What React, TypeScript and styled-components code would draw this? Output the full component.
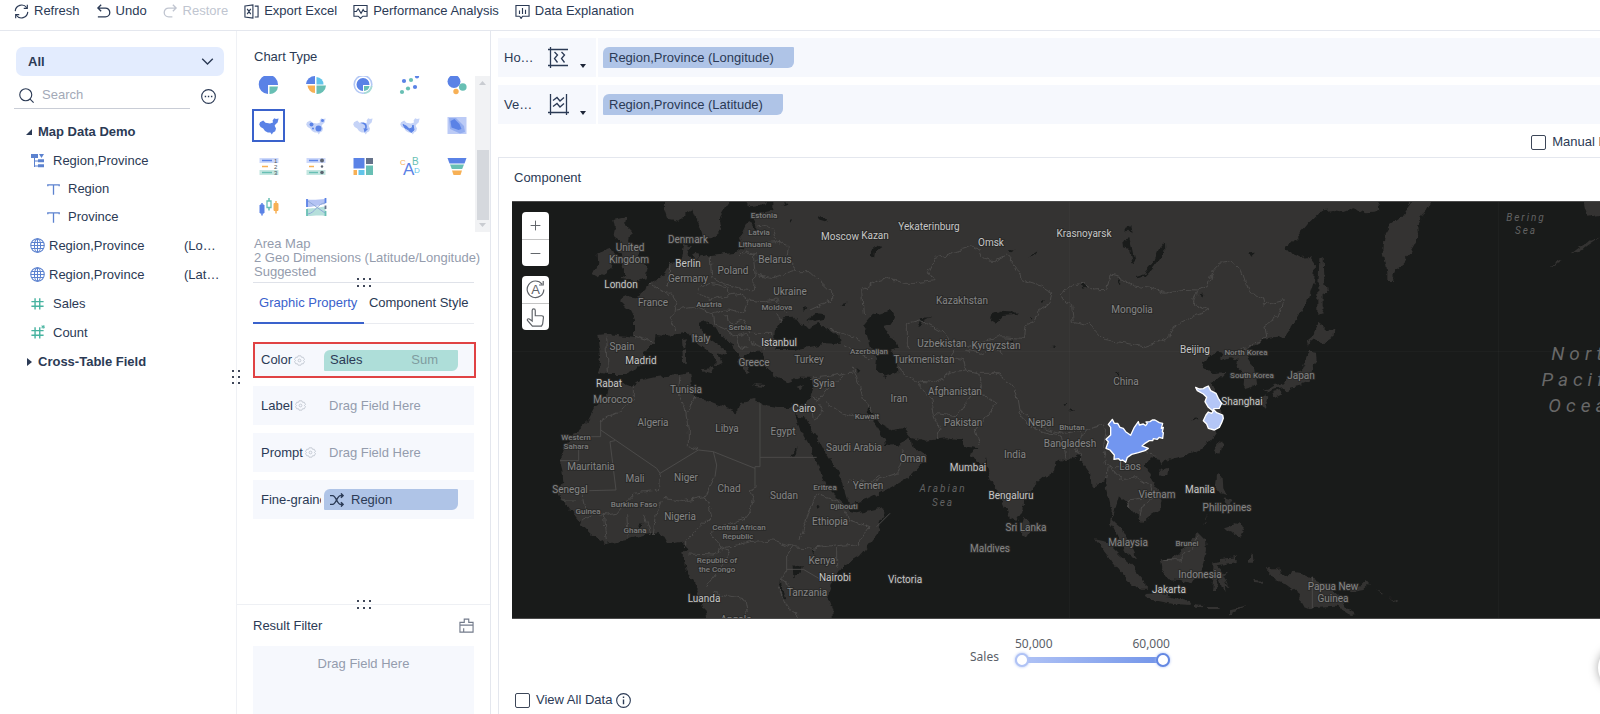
import React from "react";
import styled, { createGlobalStyle, css } from "styled-components";

const ink = "#2b3a55";
const muted = "#949cad";
const soft = "#f6f8fd";
const line = "#e4e7ee";
const accent = "#3a62cc";
const blue = "#5a82e6";
const teal = "#68bfb4";
const orange = "#f7b055";
const sky = "#62c4ea";

const GlobalStyle = createGlobalStyle`
  * { box-sizing: border-box; }
  body {
    margin: 0;
    background: #fff;
    color: ${ink};
    font: 13px/16px "Liberation Sans", Arial, sans-serif;
  }
  button, input, select { font: inherit; color: inherit; }
  button { background: none; border: 0; padding: 0; }
  svg { display: block; flex: none; }
`;

/* ---------- shell ---------- */

const Page = styled.div`
  display: flex;
  flex-direction: column;
  height: 100vh;
  overflow: hidden;
`;

const Toolbar = styled.header`
  display: flex;
  gap: 16px;
  flex: none;
  height: 31px;
  padding: 3px 14px 0;
  border-bottom: 1px solid ${line};
`;

const ToolButton = styled.button`
  display: flex;
  align-items: center;
  gap: 5px;
  height: 16px;
  white-space: nowrap;
  &:disabled { color: #c0c5d0; }
`;

const Body = styled.div`
  display: flex;
  flex: 1;
  min-height: 0;
`;

/* ---------- field list ---------- */

const FieldPanel = styled.aside`
  position: relative;
  flex: none;
  width: 237px;
  padding: 16px 12px 0 14px;
  border-right: 1px solid #eff1f5;
`;

const SelectWrap = styled.div`
  position: relative;
  margin-left: 2px;
  svg { position: absolute; right: 10px; top: 8px; pointer-events: none; }
`;

const GroupSelect = styled.select`
  appearance: none;
  width: 100%;
  height: 29px;
  padding: 0 12px;
  border: 0;
  border-radius: 7px;
  background: #e3ecfe;
  font-weight: bold;
`;

const SearchRow = styled.div`
  display: flex;
  align-items: center;
  gap: 11px;
  height: 33px;
  margin-bottom: 8px;
`;

const SearchBox = styled.label`
  display: flex;
  align-items: center;
  gap: 8px;
  width: 176px;
  height: 33px;
  padding: 6px 5px 0;
  border-bottom: 1px solid #c9cdd6;
  input {
    flex: 1;
    min-width: 0;
    padding: 0;
    border: 0;
    outline: 0;
    background: none;
  }
  input::placeholder { color: #a3a9b7; opacity: 1; }
`;

const IconButton = styled.button`
  display: grid;
  place-items: center;
  margin-top: 8px;
`;

const Tree = styled.ul`
  margin: 0;
  padding: 0;
  list-style: none;
`;

const TreeRow = styled.li<{ $indent: number; $h?: number; $gap?: number; $bold?: boolean }>`
  display: flex;
  align-items: center;
  gap: ${(p) => p.$gap ?? 8}px;
  height: ${(p) => p.$h ?? 29}px;
  padding-left: ${(p) => p.$indent}px;
  font-weight: ${(p) => (p.$bold ? "bold" : "normal")};
`;

const FieldSuffix = styled.span`
  margin-left: auto;
  width: 40px;
`;

const SideGrip = styled.div`
  position: absolute;
  right: -5px;
  top: 339px;
`;

/* ---------- chart settings ---------- */

const SettingsPanel = styled.section`
  display: flex;
  flex-direction: column;
  flex: none;
  width: 254px;
  border-right: 1px solid ${line};
`;

const SettingsMain = styled.div`
  flex: 1;
  min-height: 0;
  overflow: hidden;
`;

const PanelTitle = styled.h2`
  margin: 0;
  padding: 18px 17px 0;
  height: 45px;
  font-size: 13px;
  font-weight: normal;
`;

const ChartScroller = styled.div`
  display: flex;
  height: 156px;
  overflow: hidden;
`;

const ChartGrid = styled.div`
  display: grid;
  flex: 1;
  min-width: 0;
  align-content: start;
  grid-template-columns: repeat(5, 47px);
  grid-auto-rows: 41px;
  place-items: center;
  margin-top: -12px;
  padding-left: 8px;
`;

const ChartButton = styled.button<{ $active?: boolean }>`
  display: grid;
  place-items: center;
  width: 33px;
  height: 33px;
  border: 2px solid ${(p) => (p.$active ? accent : "transparent")};
  svg { overflow: visible; }
`;

const ScrollTrack = styled.div`
  display: flex;
  flex-direction: column;
  align-items: center;
  justify-content: space-between;
  width: 15px;
  padding: 5px 0;
  background: #f1f2f4;
`;

const ScrollThumb = styled.div`
  width: 12px;
  height: 70px;
  margin-top: 62px;
  background: #d5d8dd;
`;

const ChartHint = styled.p`
  margin: 0 0 3px;
  padding: 5px 0 0 17px;
  line-height: 14px;
  color: ${muted};
  white-space: nowrap;
`;

const GripRow = styled.div<{ $wide?: boolean }>`
  position: relative;
  height: 1px;
  margin: 0 ${(p) => (p.$wide ? 0 : 16)}px;
  background: ${(p) => (p.$wide ? "#eef0f4" : "#dfe2e9")};
  svg { position: absolute; left: calc(50% - 7px); top: -4px; }
`;

const Tabs = styled.div`
  display: flex;
  height: 41px;
  margin: 0 16px 18px;
  border-bottom: 1px solid #e9ebf0;
`;

const Tab = styled.button<{ $active?: boolean }>`
  flex: 1;
  min-width: 0;
  height: 41px;
  white-space: nowrap;
  border-bottom: 2px solid ${(p) => (p.$active ? accent : "transparent")};
  color: ${(p) => (p.$active ? accent : ink)};
`;

const PropertyList = styled.div`
  display: flex;
  flex-direction: column;
  gap: 8px;
  padding: 0 16px;
`;

const PropertyRow = styled.div<{ $marked?: boolean }>`
  display: flex;
  align-items: center;
  height: 39px;
  padding: 0 16px 0 8px;
  background: ${soft};
  ${(p) =>
    p.$marked &&
    css`
      height: 36px;
      margin-right: -2px;
      padding: 0 16px 0 6px;
      border: 2px solid #e04244;
    `}
`;

const PropertyName = styled.div`
  display: flex;
  align-items: center;
  gap: 2px;
  flex: none;
  width: 60px;
  margin-right: 3px;
  overflow: hidden;
  white-space: nowrap;
`;

const DropHint = styled.span`
  padding-left: 5px;
  color: ${muted};
`;

const Chip = styled.button<{ $tone: "teal" | "blue"; $fill?: boolean }>`
  display: flex;
  align-items: center;
  gap: 7px;
  height: 21px;
  padding: 0 20px 0 6px;
  border-radius: 6px 1px;
  background: ${(p) => (p.$tone === "teal" ? "#aeded9" : "#afc4e7")};
  white-space: nowrap;
  ${(p) => p.$fill && css`flex: 1;`}
`;

const Aggregate = styled.span`
  margin-left: auto;
  color: #7f9c9f;
`;

const FilterSection = styled.section`
  display: flex;
  flex-direction: column;
  flex: none;
  height: 110px;
`;

const FilterHead = styled.div`
  display: flex;
  justify-content: space-between;
  align-items: center;
  height: 41px;
  padding: 0 16px;
`;

const FilterDrop = styled.div`
  flex: 1;
  margin: 0 16px;
  padding-top: 10px;
  background: ${soft};
  color: ${muted};
  text-align: center;
`;

/* ---------- workspace ---------- */

const Workspace = styled.main`
  display: flex;
  flex-direction: column;
  flex: 1;
  min-width: 0;
  padding: 7px 0 0 7px;
  overflow: hidden;
`;

const AxisRow = styled.div`
  display: flex;
  gap: 2px;
  flex: none;
  height: 39px;
  margin-bottom: 8px;
`;

const AxisLabel = styled.div`
  display: flex;
  align-items: center;
  width: 98px;
  padding: 0 10px 0 6px;
  background: ${soft};
  span { width: 44px; }
`;

const AxisButton = styled.button`
  display: flex;
  align-items: flex-end;
  gap: 11px;
`;

const AxisFields = styled.div`
  display: flex;
  align-items: center;
  flex: 1;
  padding-left: 5px;
  background: ${soft};
`;

const ManualRow = styled.div`
  display: flex;
  justify-content: flex-end;
  align-items: flex-start;
  flex: none;
  height: 25px;
  padding-top: 2px;
`;

const Check = styled.label<{ $bleed?: boolean }>`
  display: flex;
  align-items: center;
  gap: 6px;
  white-space: nowrap;
  ${(p) => p.$bleed && css`margin-right: -44px;`}
  input {
    appearance: none;
    width: 15px;
    height: 15px;
    margin: 0;
    border: 1px solid #3c4658;
    border-radius: 2px;
    background: #fff;
  }
`;

const Card = styled.section`
  position: relative;
  display: flex;
  flex-direction: column;
  flex: 1;
  min-height: 0;
  border: solid ${line};
  border-width: 1px 0 0 1px;
`;

const CardTitle = styled.h1`
  flex: none;
  margin: 0;
  height: 43px;
  padding: 12px 15px;
  font-size: 13px;
  font-weight: normal;
`;

const MapFrame = styled.div`
  position: relative;
  flex: 1;
  min-height: 0;
  margin-left: 13px;
  border: solid #4b4b4b;
  border-width: 1px 0;
  background: #191b1a;
  overflow: hidden;
`;

const MapSvg = styled.svg`
  width: 100%;
  height: 100%;
  font-family: Roboto, sans-serif;
`;

const MapTools = styled.div`
  position: absolute;
  left: 10px;
  top: 10px;
  display: flex;
  flex-direction: column;
  gap: 10px;
`;

const ToolPair = styled.div`
  width: 27px;
  border-radius: 4px;
  background: #fff;
  overflow: hidden;
`;

const MapTool = styled.button`
  display: grid;
  place-items: center;
  width: 27px;
  height: 27px;
  color: #5f6368;
  & + & { border-top: 1px solid #c4c4c4; }
`;

const CardFoot = styled.footer`
  display: flex;
  flex-direction: column;
  flex: none;
  height: 95px;
  padding: 12px 0 0 16px;
`;

const Legend = styled.div`
  display: flex;
  align-items: center;
  gap: 16px;
  align-self: center;
  margin-left: 25px;
  height: 36px;
  font: 12px/16px "Noto Sans", sans-serif;
  color: #5b5f69;
`;

const LegendScale = styled.div`
  width: 155px;
`;

const LegendTexts = styled.div`
  display: flex;
  justify-content: space-between;
  height: 16px;
`;

const LegendName = styled.span`
  padding-top: 18px;
  height: 36px;
`;

const SliderTrack = styled.div`
  position: relative;
  height: 6px;
  margin-top: 5px;
  border-radius: 3px;
  background: linear-gradient(90deg, #b3c5f6, #6f92e8);
`;

const RangeInput = styled.input<{ $ring: string }>`
  position: absolute;
  left: 0;
  top: -5px;
  width: 100%;
  height: 16px;
  margin: 0;
  appearance: none;
  background: none;
  pointer-events: none;
  &::-webkit-slider-thumb {
    appearance: none;
    width: 14px;
    height: 14px;
    border: 2px solid ${(p) => p.$ring};
    border-radius: 50%;
    background: #fff;
    box-shadow: 0 0 3px #a9bdf3;
    pointer-events: auto;
  }
`;

const FootRow = styled.div`
  display: flex;
  align-items: center;
  gap: 4px;
  margin-top: 25px;
`;

const FloatButton = styled.button`
  position: absolute;
  right: -42px;
  bottom: 24px;
  width: 44px;
  height: 44px;
  border-radius: 50%;
  background: #fff;
  box-shadow: 0 0 10px rgba(0, 0, 0, 0.35);
`;

/* ---------- small icons ---------- */

type StrokeProps = { size?: number; w?: number; color?: string; children: React.ReactNode };
const Stroke = ({ size = 15, w = 1.2, color = "currentColor", children }: StrokeProps) => (
  <svg width={size} height={size} viewBox="0 0 16 16" fill="none" stroke={color} strokeWidth={w}>
    {children}
  </svg>
);

const Dots = ({ cols, rows }: { cols: number; rows: number }) => (
  <svg width={cols * 7 - 5} height={rows * 7 - 5} fill="#3f4759">
    {Array.from({ length: cols * rows }, (_, i) => (
      <rect key={i} x={(i % cols) * 6} y={Math.floor(i / cols) * (rows === 2 ? 7 : 6)} width="2" height="2" />
    ))}
  </svg>
);

const RefreshIcon = () => (
  <Stroke>
    <path d="M1.3 7.6A6.8 6.8 0 0 1 13.6 4M14.7 8.4A6.8 6.8 0 0 1 2.4 12" />
    <path d="M14.2 .8V4.6H10.4M1.8 15.2V11.4H5.6" />
  </Stroke>
);
const UndoIcon = () => (
  <Stroke w={1.4}>
    <path d="M5.5 .8 2 4.3 5.5 7.8M2 4.3H10a4.7 4.7 0 0 1 0 9.4H2" />
  </Stroke>
);
const RestoreIcon = () => (
  <Stroke w={1.4}>
    <path d="M10.5 .8 14 4.3 10.5 7.8M14 4.3H6a4.7 4.7 0 0 0 0 9.4H10" />
  </Stroke>
);
const ExcelIcon = () => (
  <Stroke>
    <path d="M1 2.2 9.5 1v14L1 13.8zM11.5 2.2H15v11.6h-3.5M3.4 5.2l3.8 5.6M7.2 5.2l-3.8 5.6" />
  </Stroke>
);
const PerfIcon = () => (
  <Stroke>
    <path d="M5.5 13H1V1.6h14V13h-4.5L8 15.4 5.5 13M1 8h2.6l2-3 3 5 2.2-4 1.4 2H15" />
  </Stroke>
);
const ExplainIcon = () => (
  <Stroke>
    <path d="M5 13H1V1.6h14V13H8L6.5 15.4 5 13M4.8 7v3.6M8 4.2v6.4M11.2 6v4.6" />
  </Stroke>
);
const GearIcon = () => (
  <Stroke size={11} w={1.1} color="#b9bfca">
    <path d="M6 1.2h4l1 2.2 2.4-.2 1.8 3.4L13.8 8l1.4 1.6-1.8 3.3-2.4-.2-1 2.1H6l-1-2.1-2.4.2L.8 9.6 2.2 8 .8 6.6l1.8-3.4 2.4.2z" />
    <circle cx="8" cy="8" r="2" />
  </Stroke>
);
const GlobeIcon = () => (
  <Stroke color="#5c82cf" w={1.1}>
    <circle cx="8" cy="8" r="7.2" />
    <ellipse cx="8" cy="8" rx="3.3" ry="7.2" />
    <path d="M8 .8v14.4M1.7 4.8h12.6M1.7 11.2h12.6M.8 8h14.4" />
  </Stroke>
);
const HashIcon = ({ star }: { star?: boolean }) => (
  <Stroke color="#47b3a0" w={1.5}>
    <path d="M5.4 2.5v12M10.4 2.5v12M1.5 6h13M1.5 11h13" />
    {star && <path d="M14 0v4M12.2 1l3.6 2M15.8 1l-3.6 2" strokeWidth="1" />}
  </Stroke>
);
const TextIcon = () => (
  <Stroke size={13} color="#5c82cf" w={1.6}>
    <path d="M1 4V2.2h14V4M8 2.2V14.5" />
  </Stroke>
);
const LevelIcon = () => (
  <svg width="14" height="14" viewBox="0 0 14 14" fill="#5c82cf">
    <path d="M0 0h7v4H0zM8 0h5l-2.5 4zM3 4h1v9H3zM4 6.5h3v1H4zM4 11.5h3v1H4zM7 5.2h6v3H7zM7 10.2h6v3H7z" />
  </svg>
);
const Triangle = ({ open }: { open?: boolean }) => (
  <svg width="6" height="8" viewBox="0 0 6 8" fill={ink}>
    <path d={open ? "M6 1v6H0z" : "M1 0l5 4-5 4z"} />
  </svg>
);
const ScrollArrow = ({ up }: { up?: boolean }) => (
  <svg width="7" height="4" fill="#c9ccd1">
    <path d={up ? "M0 4 3.5 0 7 4z" : "M0 0h7L3.5 4z"} />
  </svg>
);
const ShuffleIcon = () => (
  <Stroke size={14} w={1.7}>
    <path d="M0 3h3c4 0 5 10 9 10h3M0 13h3c4 0 5-10 9-10h3M12.5 .5 15 3l-2.5 2.5M12.5 10.5 15 13l-2.5 2.5" />
  </Stroke>
);
const CleanIcon = () => (
  <Stroke color="#737b8b">
    <path d="M1 15V4.6h4.6V1.2h4.8v3.4H15V15zM1 7.6h14M5 15v-4" />
  </Stroke>
);
const AxisIcon = ({ vertical }: { vertical?: boolean }) => (
  <svg width="21" height="21" viewBox="0 0 21 21" fill="none" stroke={ink} strokeWidth="1.3">
    {vertical ? (
      <path d="M2.5 0v21M18.5 0v21M0 18.5h21M5 6.5l4-3 3 3.5 4-3.5M5 12.5l4-3 3 3.5 4-3.5" />
    ) : (
      <path d="M2.5 0v21M0 2.5h20M0 18.5h20M6.5 5l3 3-3 3.5 3 4M13.5 5l3 3-3 3.5 3 4" />
    )}
  </svg>
);

/* ---------- chart type pictograms ---------- */

const Glyph = styled.text`
  font-family: "Liberation Sans", Arial, sans-serif;
  stroke: none;
`;

const chinaShape =
  "M1 6.2 4.2 4.6 6.5 6.8 11 7.6 14 6.4 13.6 4.6 15.2 2.2 17 3 19.6 2.6 18.6 6.4 16.6 8.2 15.6 9.8 17 12.4 16.2 15.2 14 16.6 12.8 18.4 11.4 16.6 8.8 16.4 6 15 4.2 12.6 1.6 11 .2 8.4z";
const China = ({ fill = "#c5d3f7" }: { fill?: string }) => <path d={chinaShape} fill={fill} />;

const chartIcons: { name: string; art: React.ReactNode }[] = [
  { name: "Pie", art: <><path d="M9.5 0A9.5 9.5 0 1 0 9 19V10h10A9.5 9.5 0 0 0 9.5 0" fill={blue} /><path d="M10.5 11.5H19a8 8 0 0 1-8.5 7.5z" fill={teal} /></> },
  { name: "Multi-layer Pie", art: <><path d="M9 9V1a9 9 0 0 0-9 8z" fill={blue} /><path d="M10.5 9.5V2a7.5 7.5 0 0 1 7 7.5z" fill={sky} /><path d="M9 10.5V18a8 8 0 0 1-7.5-7.5z" fill={orange} /><path d="M10.5 10.5H20a9 9 0 0 1-9.5 8.5z" fill={teal} /></> },
  { name: "Rose", art: <><circle cx="10" cy="9.5" r="8.8" fill="none" stroke="#b4c8f5" strokeWidth="1.6" /><path d="M10 3a6.5 6.5 0 1 0 0 13V10h6.5A6.5 6.5 0 0 0 10 3" fill={blue} /><path d="M11 11h5.5a5.5 5.5 0 0 1-5.5 5z" fill={teal} /><path d="M11 18.2A8.8 8.8 0 0 0 18.8 11" fill="none" stroke="#a7dcd4" strokeWidth="1.6" /></> },
  { name: "Scatter", art: <>{[[4, 6, blue], [11, 5, teal], [17, 1.5, blue], [2, 17, teal], [8, 13.5, teal], [15, 12, blue]].map(([x, y, f], i) => <circle key={i} cx={x} cy={y} r="2.1" fill={f as string} />)}</> },
  { name: "Bubble", art: <><circle cx="7" cy="6.5" r="6.5" fill={blue} /><circle cx="15.8" cy="12" r="3.8" fill={teal} /><circle cx="9" cy="16.5" r="2.7" fill={orange} /></> },
  { name: "Area Map", art: <China fill={blue} /> },
  { name: "Point Map", art: <><China /><circle cx="5.5" cy="8.5" r="2" fill={blue} /><circle cx="12.5" cy="12.5" r="3" fill={blue} /><circle cx="16.5" cy="4.5" r="1.5" fill={blue} /><circle cx="7" cy="12.5" r="1" fill={blue} /></> },
  { name: "Flow Map", art: <><China /><path d="M7 7c5-1.500 8 1 6.500 6l2-.5-4 4-1-4.500 1.500.5c1-3-1-5-5-5.500" fill={blue} /></> },
  { name: "Line Map", art: <><China /><path d="M3 8.500l4 2 2 2.500 3-1 1-3 1 5-3 2.500-3-3-3-1.500z" fill={blue} stroke={blue} /></> },
  { name: "Heat Map", art: <><path d="M.5 1h19v17H.5z" fill="#bccbf6" /><path d="M2 2h7l8 8 1 6-5 1.5L3 13z" fill="#93adf0" /><path d="M3.5 5l4-2 5 5 2 5-3 1-7-2.5z" fill={blue} /></> },
  { name: "Group Table", art: <><path d="M.5 1h19v5H.5z" fill="#ccd8fa" /><path d="M.5 13h19v5H.5z" fill="#c3e6e0" /><path d="M3 3.5h10" stroke={blue} strokeWidth="1.5" /><path d="M3 9.5h6" stroke={orange} strokeWidth="1.5" /><path d="M3 15.5h10" stroke={teal} strokeWidth="1.5" /><g fill="#4d5460" fontSize="6"><Glyph x="15" y="6">1</Glyph><Glyph x="15" y="12">2</Glyph><Glyph x="15" y="18">3</Glyph></g></> },
  { name: "KPI Table", art: <><path d="M.5 1h19v5H.5z" fill="#ccd8fa" /><path d="M.5 13h19v5H.5z" fill="#c3e6e0" /><path d="M3 3.5h9" stroke={blue} strokeWidth="1.5" /><path d="M3 9.5h5" stroke={orange} strokeWidth="1.5" /><path d="M3 15.5h9" stroke={teal} strokeWidth="1.5" /><g fill="#5d6470"><circle cx="16" cy="3.5" r="2" /><circle cx="16" cy="9.5" r="1.2" /><circle cx="16" cy="15.5" r="1.8" /></g></> },
  { name: "Treemap", art: <><path d="M.5 1h11v10.5H.5z" fill={blue} /><path d="M13 1h7v6h-7z" fill="#65728a" /><path d="M.5 13H4v5H.5z" fill={orange} /><path d="M5.5 13h6v5h-6z" fill={sky} /><path d="M13 8.5h7V18h-7z" fill={teal} /></> },
  { name: "Word Cloud", art: <><Glyph x="3" y="18" fontSize="17" fill={blue}>A</Glyph><Glyph x="0" y="8" fontSize="8" fill={orange}>C</Glyph><Glyph x="12" y="8" fontSize="10" fill={teal}>B</Glyph><Glyph x="14" y="16" fontSize="8" fill={sky}>D</Glyph></> },
  { name: "Funnel", art: <><path d="M.5 1h19l-2 5.5h-15z" fill={blue} /><path d="M3 7.5h14L15.2 12H4.8z" fill={teal} /><path d="M5 13.5h10L13.5 18h-7z" fill={orange} /></> },
  { name: "Box Plot", art: <><path d="M3 5v12.5" stroke={blue} strokeWidth="1.5" /><path d="M1 7h4v8H1z" fill={blue} stroke={blue} /><path d="M10 0v3M10 9.5v3" stroke={teal} strokeWidth="1.5" /><path d="M8 3h4v6.5H8z" fill="none" stroke={teal} strokeWidth="1.3" /><path d="M17 3v12.5" stroke={orange} strokeWidth="1.5" /><path d="M15 5.5h4v7h-4z" fill={orange} stroke={orange} /></> },
  { name: "Sankey", art: <><path d="M1 1.5C8 2 12 1.5 19.5 1v5C12 7 8 9 1 9z" fill="#b4c3f3" /><path d="M1 10.5c8 0 10-1 18.5-2V18C12 17 8 18 1 18z" fill="#b5dfdb" /><path d="M2 3l17 12M2 16C9 15 12 5 19 5" stroke="#8fa8d8" fill="none" /><path d="M1 1v8M19.5 0v5" stroke={blue} strokeWidth="1.8" /><path d="M1 11v7M19.5 13v5" stroke={teal} strokeWidth="1.8" /><path d="M19.5 7.5V11" stroke="#65728a" strokeWidth="1.8" /></> },
];

/* ---------- map ---------- */

const continents = [
  // Eurasia and Africa
  "M790 0 2605 0 2608 32 2590 38 2570 40 2550 32 2530 25 2500 36 2470 30 2430 35 2395 70 2360 112 2327 145 2345 165 2370 175 2400 170 2415 190 2413 240 2395 300 2365 350 2325 410 2290 415 2260 420 2240 435 2205 450 2215 475 2235 505 2242 550 2225 560 2200 568 2202 540 2198 515 2180 500 2185 480 2160 472 2130 482 2140 458 2122 456 2110 465 2095 480 2075 490 2080 505 2100 510 2112 520 2145 515 2130 530 2105 550 2115 575 2135 605 2130 625 2140 645 2130 680 2110 710 2080 745 2035 765 1990 775 1965 785 1955 795 1945 780 1920 775 1905 800 1920 830 1945 865 1955 900 1950 930 1925 945 1895 970 1890 950 1865 935 1850 905 1825 885 1815 920 1805 960 1840 990 1850 1010 1870 1050 1882 1078 1850 1060 1825 1015 1810 985 1800 970 1805 930 1795 890 1788 840 1770 850 1745 865 1740 820 1715 785 1705 765 1690 775 1660 778 1640 790 1635 810 1605 830 1570 860 1540 890 1537 940 1520 965 1495 950 1470 890 1445 840 1432 795 1428 770 1422 792 1400 785 1380 762 1405 745 1370 740 1355 722 1310 715 1250 722 1200 710 1180 685 1145 690 1110 670 1085 635 1075 625 1070 640 1095 670 1112 700 1122 715 1125 738 1160 735 1185 720 1202 712 1205 735 1245 765 1235 790 1200 830 1140 865 1080 895 1050 905 1020 912 1015 935 1040 940 1120 922 1120 950 1100 1000 1070 1040 1050 1065 1000 1095 985 1120 960 1160 955 1190 970 1230 972 1270 590 1270 585 1230 560 1160 530 1110 520 1060 535 1045 515 1025 490 1030 470 1028 460 1010 440 1000 400 1005 350 1020 285 1032 245 1005 210 970 180 930 155 895 145 870 160 840 155 800 150 780 165 740 190 700 235 660 255 620 290 600 300 560 335 548 365 560 395 540 440 530 510 525 540 520 545 545 540 565 555 590 590 600 640 620 680 637 690 610 730 600 760 615 830 625 855 615 885 620 900 590 912 560 905 530 870 530 830 545 790 525 765 495 765 470 760 455 730 455 700 470 715 500 715 520 690 500 680 460 665 430 620 395 605 370 585 360 570 365 570 385 600 420 650 455 645 468 625 460 635 490 615 500 618 475 590 450 550 420 530 395 500 400 480 410 440 405 435 430 400 455 395 490 370 515 350 525 290 525 262 520 270 470 262 405 290 402 375 410 375 360 360 330 330 300 350 290 380 295 390 275 420 255 445 240 465 215 480 190 510 185 515 160 520 130 540 140 530 165 545 180 600 165 640 160 680 155 700 140 690 110 710 70 745 90 725 45 790 30z",
  // Great Britain, Ireland
  "M310 60 350 50 345 75 365 95 360 125 385 150 395 185 415 205 410 235 370 245 330 240 350 225 335 200 340 170 325 150 335 125 310 110 315 85zM260 165 295 145 315 155 305 205 265 232 248 222 262 195z",
  // Scandinavia
  "M465 0 665 0 650 20 630 55 635 90 605 115 580 118 570 80 550 30 530 40 505 65 475 60 465 30zM700 0 775 0 770 15 715 22z",
  "M545 165 560 155 570 170 555 178z",
  // Mediterranean islands
  "M514 448 528 445 528 485 516 487zM516 420 527 418 526 442 518 440zM575 508 615 502 608 520 585 515zM730 552 765 555 760 560 732 558zM860 565 885 555 875 570z",
  // Sri Lanka
  "M1540 950 1555 965 1560 990 1550 1010 1537 1005 1533 975z",
  // Sumatra, Java
  "M1755 1018 1790 1025 1830 1065 1865 1095 1905 1140 1908 1172 1890 1172 1850 1140 1815 1095 1780 1050zM1905 1182 1945 1180 1985 1188 2030 1200 2040 1215 1990 1212 1930 1200zM2050 1212 2080 1215 2078 1222 2052 1220zM2090 1218 2130 1218 2128 1226 2092 1224z",
  // Borneo, Sulawesi
  "M1952 1078 1985 1075 2010 1060 2040 1020 2065 1000 2085 1020 2088 1050 2080 1090 2065 1125 2050 1150 2010 1140 1975 1138 1958 1110zM2110 1090 2180 1080 2180 1086 2120 1096 2140 1115 2155 1112 2140 1125 2155 1160 2140 1160 2125 1130 2118 1170 2106 1170 2110 1130z",
  // Philippines, Taiwan, Hainan
  "M2118 825 2138 830 2140 865 2150 885 2130 880 2115 858zM2140 895 2165 900 2160 915 2175 925 2155 930zM2142 985 2165 978 2190 960 2202 985 2190 1010 2170 1000 2150 992zM2080 970 2098 945 2080 975zM2122 725 2135 728 2128 765 2115 755zM1948 808 1975 800 1972 820 1955 828z",
  // Japan, Sakhalin
  "M2425 365 2450 388 2470 392 2468 410 2440 428 2410 418 2400 425 2398 438 2394 420 2412 405zM2400 452 2418 455 2420 480 2405 515 2395 545 2370 555 2345 560 2335 580 2325 562 2290 568 2270 575 2262 572 2290 555 2325 550 2340 530 2375 515 2390 480zM2290 575 2315 570 2312 582 2292 592zM2262 580 2275 590 2268 620 2255 612zM2428 175 2438 170 2440 225 2452 280 2435 285 2435 325 2445 340 2425 345 2425 260z",
  // Kamchatka
  "M2710 0 2765 0 2750 30 2735 45 2722 75 2725 115 2705 150 2708 155 2680 190 2660 205 2645 240 2632 240 2632 215 2620 150 2625 100 2640 75 2675 50zM2738 42 2748 38 2742 50z",
  "M3220 0 3300 0 3300 50 3270 45 3235 50 3225 25zM3205 145 3235 125 3270 112 3240 132 3210 155 3185 160zM3125 195 3155 180 3148 190 3130 198z",
  // New Guinea, neighbouring islands
  "M2265 1105 2305 1105 2310 1125 2325 1130 2345 1118 2385 1125 2430 1145 2460 1165 2490 1190 2510 1225 2540 1242 2520 1245 2480 1220 2450 1222 2400 1225 2365 1210 2370 1185 2330 1155 2300 1145 2280 1120zM2520 1165 2555 1155 2570 1140 2580 1152 2560 1170 2530 1175zM2604 1168 2620 1180 2616 1184zM2640 1195 2665 1205 2660 1210zM2230 1140 2265 1142 2262 1148 2232 1146zM2160 1228 2212 1215 2175 1232 2155 1245zM2130 1080 2175 1075 2182 1070 2170 1088 2130 1088zM2220 1065 2228 1058 2230 1080 2220 1090zM2130 1130 2145 1145 2150 1175 2135 1165z",
];

const waters = [
  // Red Sea, Black Sea, Azov, Caspian
  "M855 645 870 655 884 650 900 680 920 710 945 760 975 800 1000 850 1005 880 1014 908 1018 925 1000 912 975 888 955 868 940 835 920 785 895 730 870 685z",
  "M800 450 795 420 798 385 820 352 850 350 870 375 888 372 900 385 925 372 960 390 985 405 990 432 950 430 900 440 850 450z",
  "M895 358 920 340 948 343 940 360 915 366z",
  "M1060 375 1085 345 1145 332 1155 350 1150 368 1120 378 1130 400 1150 410 1160 435 1168 445 1145 455 1160 475 1162 518 1130 530 1095 510 1098 475 1080 440 1070 405z",
  // Baikal and the northern reservoirs
  "M1962 130 1963 155 1945 185 1925 210 1905 230 1880 235 1878 228 1905 220 1930 190 1945 150z",
  "M1840 120 1858 115 1865 140 1875 190 1868 190 1858 150 1842 145zM1845 95 1858 72 1862 100 1852 92z",
  // Balkhash, Aral, Central Asian lakes
  "M1445 345 1470 335 1525 338 1520 345 1475 348 1455 368 1442 360zM1230 355 1260 352 1235 365 1230 380 1222 378zM1085 150 1100 138 1115 140 1095 155 1092 175 1082 165zM1555 170 1585 152 1575 165zM1710 255 1725 252 1728 262 1714 266zM1826 235 1832 230 1830 255 1824 252zM1580 285 1600 300 1590 315 1602 312 1600 300zM1495 152 1510 148 1505 158zM1560 345 1568 350 1562 358zM1490 422 1512 418 1510 424zM1625 435 1645 432 1630 438zM1815 522 1830 520 1822 528zM2213 160 2235 158 2222 170z",
  "M1660 613 1672 612 1668 618zM1675 628 1692 632 1684 636zM2050 655 2060 652 2062 662zM2070 280 2078 278 2072 298z",
  // African lakes, northern lakes
  "M848 1100 878 1095 875 1118 850 1132zM810 1140 816 1165 828 1190 822 1192 808 1160zM905 1040 912 1045 915 1060 908 1055zM840 770 860 745 866 742 858 765zM385 975 400 970 395 990zM922 45 945 55 950 68 930 62zM820 0 830 12 822 15zM838 60 846 58 842 68zM998 318 1012 300 1008 318zM1038 505 1048 512 1040 520zM875 325 895 320 885 332zM920 918 930 920 922 926z",
];

const organicBorders = [
  "M1060 345 1055 270 1095 245 1130 235 1180 250 1230 250 1272 245 1255 215 1275 175 1340 155 1385 140 1410 150 1415 170 1450 185 1490 165 1520 200 1540 240 1590 255 1625 275 1620 310 1585 335 1570 365 1545 375 1540 415 1470 410 1410 425 1375 440 1340 440",
  "M1650 285 1690 255 1720 250 1750 270 1790 268 1800 225 1840 235 1870 258 1920 265 1960 280 2015 268 2060 270 2050 310 2100 330 2050 350 1990 380 1975 415 1900 440 1850 430 1780 418 1740 375 1690 365 1685 320 1650 290M2060 270 2095 260 2110 210 2130 190 2165 185 2195 210 2215 275 2260 295 2265 315 2320 302 2305 350 2265 375 2270 410 2200 450",
  "M1192 445 1192 370 1225 360 1260 375 1305 400 1340 440 1320 470 1365 480 1370 510 1330 515 1265 550 1220 545 1160 505M1365 450 1410 460 1450 440 1475 460M1370 510 1410 520 1455 520 1510 555 1525 600 1530 630 1550 645 1590 680 1660 700 1720 690 1780 675M1410 520 1415 580 1460 610 1420 660 1395 690 1410 735M1220 545 1260 590 1270 640 1340 650 1380 590 1415 560M1270 640 1290 690 1280 720",
  "M1525 630 1545 670 1600 695 1650 705M1650 705 1665 770M1720 690 1700 745 1715 785M1780 675 1790 690 1780 740M1780 740 1790 800 1815 810 1840 840 1880 830 1925 860 1930 890 1895 920 1890 950M1790 840 1795 800 1860 800M1860 930 1855 900 1925 890M1960 1078 2010 1080 2045 1040 2065 1010M1905 750 1930 770",
  "M1050 420 1000 400 960 385M1005 440 1040 460 1085 480M1030 500 1035 520 1050 560 1060 600 1085 635M900 535 950 530 1030 515M905 590 925 600 960 560 1000 525M945 605 1000 640 1085 660M905 620 910 655 940 640 925 610M1050 860 1100 840 1160 820 1175 780 1180 745M1010 850 1020 840 1070 850 1110 825",
  "M565 265 600 250 650 260 660 285 690 280 715 300 760 305 800 300 830 340M600 165 605 230 640 250 690 265 730 270 735 225 730 160 700 150M735 225 780 235 850 215 855 190 830 180 835 140 800 125 740 130M735 180 830 180M855 215 900 215 965 275 965 300 900 330M690 160 740 165M745 75 790 85 800 120",
  "M420 250 445 270 480 280 500 310 495 335 480 350 500 390M500 330 560 320 610 340 650 330 700 340 715 300M560 280 600 300 660 285M480 190 475 260M375 410 440 430M290 410 295 520M610 340 615 375 640 385 680 410 690 440 720 445M640 345 670 370 700 360 720 400 790 400M680 410 710 400 725 430 770 445M800 340 815 365",
  "M370 560 370 600 330 635 272 660M510 525 505 580 525 620 535 690 535 740 565 750M555 590 530 640M595 910 605 950 550 1000 520 1040M595 910 585 890 615 830M460 895 520 905 585 890M460 895 450 920 435 950 430 1005M450 820 445 870 370 880 320 940 290 945 225 930 215 885M720 935 700 960 610 985 600 1000 640 1045 720 1025 790 1020 850 1040M720 935 730 900 720 870 740 860M850 1040 830 1070 830 1110 810 1140 840 1160M870 1020 895 940 920 880 980 900 1020 960 1080 980 1040 1035 980 1040 980 1100M850 1040 910 1045 975 1035M535 1062 610 1065 640 1045M640 1045 660 1050 620 1120 590 1160M610 1180 680 1195 705 1200 715 1257M805 1160 830 1220 860 1240 860 1257M350 940 355 1020M400 940 420 1005M155 900 200 900M280 945 290 1030M210 960 245 945",
];

const surveyedBorders =
  "M272 660v50h-50M272 690l168 115 10 15 115-70 45 5 125 50M750 610v190h-15v60M750 772h170M300 725l15-3M300 725l18 145-80 2M206 740v42h-56M610 755l10 40-5 35M830 1108h50l60 35M1100 980l40-40M2407 1130v95";

const regions = {
  high: "M1807 658 1813 670 1823 670 1830 682 1840 685 1847 695 1862 706 1873 682 1885 665 1888 675 1900 672 1907 677 1912 670 1908 666 1920 665 1927 660 1935 660 1948 668 1958 670 1954 685 1960 682 1957 695 1960 698 1958 715 1948 712 1942 718 1930 716 1928 722 1918 722 1905 730 1896 738 1915 745 1905 752 1885 758 1865 763 1852 772 1847 787 1838 780 1832 782 1826 776 1812 778 1813 765 1800 750 1788 745 1795 725 1788 718 1802 705 1802 682 1795 673z",
  low: "M2057 562 2068 567 2080 566 2086 562 2095 558 2102 572 2118 580 2125 595 2135 610 2128 625 2112 626 2108 632 2095 622 2085 605 2090 592 2080 582 2062 572zM2095 636 2105 640 2112 630 2120 638 2138 645 2140 655 2135 668 2128 682 2113 690 2095 685 2090 672 2080 662 2088 645z",
};

type Label = [string, number, number, ("city" | "small" | "sea" | "ocean")?];
const labels: Label[] = [
  ["Estonia", 252, 16, "small"], ["Latvia", 247, 33, "small"], ["Lithuania", 243, 45, "small"],
  ["Denmark", 176, 41], ["United", 118, 49], ["Kingdom", 117, 61], ["Berlin", 176, 65, "city"],
  ["Belarus", 263, 61], ["Poland", 221, 72], ["Germany", 176, 80], ["London", 109, 86, "city"],
  ["Ukraine", 278, 93], ["France", 141, 104], ["Austria", 197, 105, "small"], ["Moldova", 265, 108, "small"],
  ["Serbia", 228, 128, "small"], ["Italy", 189, 140], ["Istanbul", 267, 144, "city"], ["Spain", 110, 148],
  ["Madrid", 129, 162, "city"], ["Greece", 242, 164], ["Turkey", 297, 161], ["Azerbaijan", 357, 152, "small"],
  ["Syria", 312, 185], ["Rabat", 97, 185, "city"], ["Tunisia", 174, 191], ["Morocco", 101, 201],
  ["Cairo", 292, 210, "city"], ["Kuwait", 355, 217, "small"], ["Algeria", 141, 224], ["Libya", 215, 230],
  ["Egypt", 271, 233], ["Western", 64, 238, "small"], ["Sahara", 64, 247, "small"], ["Saudi Arabia", 342, 249],
  ["Mauritania", 79, 268], ["Mali", 123, 280], ["Niger", 174, 279], ["Chad", 217, 290], ["Senegal", 58, 291],
  ["Sudan", 272, 297], ["Eritrea", 313, 288, "small"], ["Yemen", 356, 287], ["Burkina Faso", 122, 305, "small"],
  ["Guinea", 76, 312, "small"], ["Djibouti", 332, 307, "small"], ["Nigeria", 168, 318], ["Ethiopia", 318, 323],
  ["Ghana", 123, 331, "small"], ["Central African", 227, 328, "small"], ["Republic", 226, 337, "small"],
  ["Republic of", 205, 361, "small"], ["the Congo", 205, 370, "small"], ["Kenya", 310, 362],
  ["Nairobi", 323, 379, "city"], ["Tanzania", 295, 394], ["Luanda", 192, 400, "city"], ["Angola", 224, 421],
  ["Moscow", 328, 38, "city"], ["Kazan", 363, 37, "city"], ["Yekaterinburg", 417, 28, "city"],
  ["Omsk", 479, 44, "city"], ["Krasnoyarsk", 572, 35, "city"], ["Kazakhstan", 450, 102], ["Mongolia", 620, 111],
  ["Uzbekistan", 430, 145], ["Kyrgyzstan", 484, 147], ["Turkmenistan", 412, 161], ["Beijing", 683, 151, "city"],
  ["China", 614, 183], ["Afghanistan", 443, 193], ["Iran", 387, 200], ["Pakistan", 451, 224], ["Nepal", 529, 224],
  ["Bhutan", 560, 228, "small"], ["Bangladesh", 558, 245], ["India", 503, 256], ["Oman", 401, 260],
  ["Mumbai", 456, 269, "city"], ["Arabian", 431, 290, "sea"], ["Sea", 431, 304, "sea"], ["Laos", 618, 268],
  ["Bengaluru", 499, 297, "city"], ["Vietnam", 645, 296], ["Manila", 688, 291, "city"], ["Philippines", 715, 309],
  ["Sri Lanka", 514, 329], ["Maldives", 478, 350], ["Malaysia", 616, 344], ["Brunei", 675, 344, "small"],
  ["Indonesia", 688, 376], ["Jakarta", 657, 391, "city"], ["Victoria", 393, 381, "city"],
  ["North Korea", 734, 153, "small"], ["South Korea", 740, 176, "small"], ["Japan", 789, 177],
  ["Shanghai", 730, 203, "city"], ["Papua New", 821, 388], ["Guinea", 821, 400],
  ["Bering", 1014, 19, "sea"], ["Sea", 1014, 32, "sea"],
  ["North", 1075, 158, "ocean"], ["Pacific", 1075, 184, "ocean"], ["Ocean", 1075, 210, "ocean"],
];

const MapText = styled.text<{ $kind: string }>`
  text-anchor: middle;
  paint-order: stroke;
  stroke: #2a2a29;
  stroke-width: 2px;
  stroke-linejoin: round;
  fill: #858585;
  font-size: 10px;
  ${(p) => p.$kind === "city" && css`fill: #c6c6c6;`}
  ${(p) => p.$kind === "small" && css`font-size: 8px; font-weight: 500; fill: #7d7d7d;`}
  ${(p) => p.$kind === "sea" && css`font-style: italic; letter-spacing: 2px; fill: #626262; stroke: none;`}
  ${(p) => p.$kind === "ocean" && css`font-size: 19px; font-style: italic; letter-spacing: 5px; fill: #686868; stroke: none;`}
`;

const WorldMap = () => (
  <MapSvg viewBox="0 0 1088 416" preserveAspectRatio="xMinYMin slice" role="img" aria-label="Sales by province">
    <defs>
      <filter id="coast" x="0" y="0" width="1" height="1" colorInterpolationFilters="sRGB">
        <feTurbulence type="fractalNoise" baseFrequency="0.12" numOctaves="3" seed="4" />
        <feDisplacementMap in="SourceGraphic" scale="7" xChannelSelector="R" yChannelSelector="G" />
      </filter>
    </defs>
    <g filter="url(#coast)">
      <rect x="-10" y="-10" width="1108" height="440" fill="#191b1a" />
      <g transform="scale(0.33333) translate(-6 -6)">
        {continents.map((d) => <path key={d} d={d} fill="#343332" />)}
        {waters.map((d) => <path key={d} d={d} fill="#191b1a" />)}
        {organicBorders.map((d) => <path key={d} d={d} fill="none" stroke="#4b4a49" strokeWidth="3" />)}
      </g>
    </g>
    <path d="M557.5 0v416M986.5 0v416M0 149.5h1088" stroke="#fff" strokeOpacity="0.025" />
    <g transform="scale(0.33333) translate(-6 -6)">
      <path d={surveyedBorders} fill="none" stroke="#4b4a49" strokeWidth="3" />
    </g>
    {labels.map(([text, x, y, kind = "country"]) => (
      <MapText key={text + x + y} x={x} y={y} $kind={kind}>{text}</MapText>
    ))}
    <g transform="scale(0.33333) translate(-6 -6)" stroke="#fff" strokeWidth="4" strokeLinejoin="round">
      <path d={regions.high} fill="#7296f0" />
      <path d={regions.low} fill="#b4c6f6" />
    </g>
  </MapSvg>
);

/* ---------- page ---------- */

const App = () => (
  <Page>
    <GlobalStyle />
    <Toolbar>
      <ToolButton><RefreshIcon />Refresh</ToolButton>
      <ToolButton><UndoIcon />Undo</ToolButton>
      <ToolButton disabled><RestoreIcon />Restore</ToolButton>
      <ToolButton><ExcelIcon />Export Excel</ToolButton>
      <ToolButton><PerfIcon />Performance Analysis</ToolButton>
      <ToolButton><ExplainIcon />Data Explanation</ToolButton>
    </Toolbar>
    <Body>
      <FieldPanel>
        <SelectWrap>
          <GroupSelect aria-label="Field group"><option>All</option></GroupSelect>
          <Stroke size={13} w={1.7}><path d="M1.5 4.5 8 11l6.5-6.5" /></Stroke>
        </SelectWrap>
        <SearchRow>
          <SearchBox>
            <Stroke><circle cx="7.2" cy="7.2" r="6.4" /><path d="m11.8 11.8 3.8 3.8" /></Stroke>
            <input type="text" placeholder="Search" aria-label="Search fields" />
          </SearchBox>
          <IconButton aria-label="More">
            <Stroke><circle cx="8" cy="8" r="7.3" /><path d="M4 8h1.5M7.3 8h1.5M10.6 8h1.5" strokeWidth="1.5" /></Stroke>
          </IconButton>
        </SearchRow>
        <Tree>
          <TreeRow $indent={12} $gap={6} $h={30} $bold><Triangle open />Map Data Demo</TreeRow>
          <TreeRow $indent={17} $h={28}><LevelIcon />Region,Province</TreeRow>
          <TreeRow $indent={33} $h={28}><TextIcon />Region</TreeRow>
          <TreeRow $indent={33} $h={28}><TextIcon />Province</TreeRow>
          <TreeRow $indent={16} $gap={4}><GlobeIcon />Region,Province<FieldSuffix>(Lo…</FieldSuffix></TreeRow>
          <TreeRow $indent={16} $gap={4}><GlobeIcon />Region,Province<FieldSuffix>(Lat…</FieldSuffix></TreeRow>
          <TreeRow $indent={16}><HashIcon />Sales</TreeRow>
          <TreeRow $indent={16}><HashIcon star />Count</TreeRow>
          <TreeRow $indent={12} $gap={6} $h={30} $bold><Triangle />Cross-Table Field</TreeRow>
        </Tree>
        <SideGrip><Dots cols={2} rows={3} /></SideGrip>
      </FieldPanel>

      <SettingsPanel>
        <SettingsMain>
          <PanelTitle>Chart Type</PanelTitle>
          <ChartScroller>
            <ChartGrid>
              {chartIcons.map(({ name, art }) => (
                <ChartButton key={name} aria-label={name} $active={name === "Area Map"}>
                  <svg width="20" height="19" viewBox="0 0 20 19">{art}</svg>
                </ChartButton>
              ))}
            </ChartGrid>
            <ScrollTrack><ScrollArrow up /><ScrollThumb /><ScrollArrow /></ScrollTrack>
          </ChartScroller>
          <ChartHint>Area Map<br />2 Geo Dimensions (Latitude/Longitude)<br />Suggested</ChartHint>
          <GripRow><Dots cols={3} rows={2} /></GripRow>
          <Tabs role="tablist">
            <Tab role="tab" aria-selected="true" $active>Graphic Property</Tab>
            <Tab role="tab" aria-selected="false">Component Style</Tab>
          </Tabs>
          <PropertyList>
            <PropertyRow $marked>
              <PropertyName>Color<GearIcon /></PropertyName>
              <Chip $tone="teal" $fill>Sales<Aggregate>Sum</Aggregate></Chip>
            </PropertyRow>
            <PropertyRow><PropertyName>Label<GearIcon /></PropertyName><DropHint>Drag Field Here</DropHint></PropertyRow>
            <PropertyRow><PropertyName>Prompt<GearIcon /></PropertyName><DropHint>Drag Field Here</DropHint></PropertyRow>
            <PropertyRow>
              <PropertyName>Fine-grained</PropertyName>
              <Chip $tone="blue" $fill><ShuffleIcon />Region</Chip>
            </PropertyRow>
          </PropertyList>
        </SettingsMain>
        <FilterSection>
          <GripRow $wide><Dots cols={3} rows={2} /></GripRow>
          <FilterHead>Result Filter<button aria-label="Clear filters"><CleanIcon /></button></FilterHead>
          <FilterDrop>Drag Field Here</FilterDrop>
        </FilterSection>
      </SettingsPanel>

      <Workspace>
        {[
          { short: "Ho…", field: "Region,Province (Longitude)", vertical: false },
          { short: "Ve…", field: "Region,Province (Latitude)", vertical: true },
        ].map(({ short, field, vertical }) => (
          <AxisRow key={field}>
            <AxisLabel>
              <span>{short}</span>
              <AxisButton aria-label="Axis options">
                <AxisIcon vertical={vertical} />
                <svg width="6" height="4" fill="#1d2638"><path d="M0 0h6L3 4z" /></svg>
              </AxisButton>
            </AxisLabel>
            <AxisFields><Chip $tone="blue">{field}</Chip></AxisFields>
          </AxisRow>
        ))}
        <ManualRow>
          <Check $bleed><input type="checkbox" />Manual Refresh</Check>
        </ManualRow>
        <Card>
          <CardTitle>Component</CardTitle>
          <MapFrame>
            <WorldMap />
            <MapTools>
              <ToolPair>
                <MapTool aria-label="Zoom in"><Stroke size={13}><path d="M8 2v12M2 8h12" /></Stroke></MapTool>
                <MapTool aria-label="Zoom out"><Stroke size={13}><path d="M2 8h12" /></Stroke></MapTool>
              </ToolPair>
              <ToolPair>
                <MapTool aria-label="Reset view">
                  <Stroke size={19} w={1}>
                    <path d="M13.5 3.5A7 7 0 1 0 15 8M14.5 .8v3.4H11" />
                    <Glyph x="8" y="12" fontSize="11" textAnchor="middle" fill="currentColor">A</Glyph>
                  </Stroke>
                </MapTool>
                <MapTool aria-label="Select">
                  <Stroke size={19} w={1}><path d="M5.2 9.5V2a1.2 1.2 0 0 1 2.6 0v4.5h5.4c1 0 1.6.6 1.5 1.6l-.7 5.4-1 1.7H5.4L1.2 10.5c-.5-1.2.7-1.8 1.6-1.2L5.2 11z" /></Stroke>
                </MapTool>
              </ToolPair>
            </MapTools>
          </MapFrame>
          <CardFoot>
            <Legend>
              <LegendName>Sales</LegendName>
              <LegendScale>
                <LegendTexts><span>50,000</span><span>60,000</span></LegendTexts>
                <SliderTrack>
                  <RangeInput type="range" aria-label="Minimum sales" min={50000} max={60000} defaultValue={50000} $ring="#b0c3f5" />
                  <RangeInput type="range" aria-label="Maximum sales" min={50000} max={60000} defaultValue={60000} $ring="#6488e2" />
                </SliderTrack>
              </LegendScale>
            </Legend>
            <FootRow>
              <Check><input type="checkbox" />View All Data</Check>
              <Stroke><circle cx="8" cy="8" r="7.3" /><path d="M8 6.8V12M8 3.8v1.6" strokeWidth="1.5" /></Stroke>
            </FootRow>
          </CardFoot>
          <FloatButton aria-label="Help" />
        </Card>
      </Workspace>
    </Body>
  </Page>
);

export default App;
